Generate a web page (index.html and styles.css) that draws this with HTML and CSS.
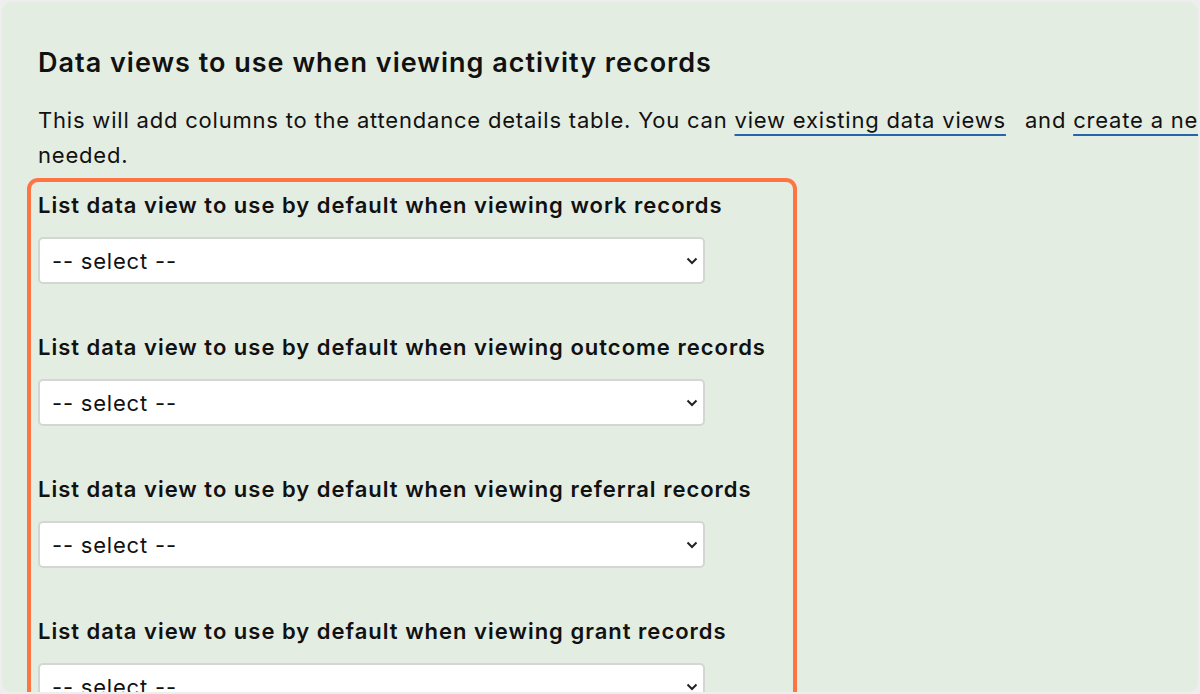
FILE: index.html
```html
<!DOCTYPE html>
<html lang="en">
<head>
<meta charset="utf-8">
<title>Data views</title>
<link rel="stylesheet" href="styles.css">
</head>
<body>
<div class="panel">
  <h2 class="title">Data views to use when viewing activity records</h2>
  <p class="intro">This will add columns to the attendance details table. You can <a class="link link-gap" href="#">view existing data views</a> and <a class="link" href="#">create a new data view</a> if needed.</p>
  <div class="highlight">
    <div class="field">
      <label class="field-label">List data view to use by default when viewing work records</label>
      <div class="select-wrap">
        <select class="select"><option>-- select --</option></select>
        <svg class="chev" width="12" height="8" viewBox="0 0 12 8"><path d="M1.5 1.5 L6 6 L10.5 1.5" fill="none" stroke="#222" stroke-width="2"/></svg>
      </div>
    </div>
    <div class="field">
      <label class="field-label">List data view to use by default when viewing outcome records</label>
      <div class="select-wrap">
        <select class="select"><option>-- select --</option></select>
        <svg class="chev" width="12" height="8" viewBox="0 0 12 8"><path d="M1.5 1.5 L6 6 L10.5 1.5" fill="none" stroke="#222" stroke-width="2"/></svg>
      </div>
    </div>
    <div class="field">
      <label class="field-label">List data view to use by default when viewing referral records</label>
      <div class="select-wrap">
        <select class="select"><option>-- select --</option></select>
        <svg class="chev" width="12" height="8" viewBox="0 0 12 8"><path d="M1.5 1.5 L6 6 L10.5 1.5" fill="none" stroke="#222" stroke-width="2"/></svg>
      </div>
    </div>
    <div class="field">
      <label class="field-label">List data view to use by default when viewing grant records</label>
      <div class="select-wrap">
        <select class="select"><option>-- select --</option></select>
        <svg class="chev" width="12" height="8" viewBox="0 0 12 8"><path d="M1.5 1.5 L6 6 L10.5 1.5" fill="none" stroke="#222" stroke-width="2"/></svg>
      </div>
    </div>
  </div>
</div>
</body>
</html>
```

FILE: styles.css
```css
html, body {
  margin: 0;
  padding: 0;
  background: #eeeeee;
  height: 100%;
  overflow: hidden;
}
body {
  font-family: Inter, "Noto Sans", sans-serif;
  color: #111;
}
.panel {
  margin: 2px 2px 0 2px;
  height: 690px;
  background: #e4ede2;
  border-radius: 9px;
  padding: 45px 0 0 36px;
  overflow: hidden;
  box-sizing: border-box;
}
.title {
  margin: 0;
  font-size: 27px;
  font-weight: 600;
  line-height: 32px;
  letter-spacing: 1px;
}
.intro {
  margin: 24px 0 0 0;
  width: 1370px;
  font-size: 22px;
  line-height: 35px;
  letter-spacing: 0.8px;
}
.link {
  color: #111;
  text-decoration: underline;
  text-decoration-color: #2565ae;
  text-decoration-thickness: 2px;
  text-underline-offset: 6px;
}
.link-gap {
  margin-right: 12px;
}
.highlight {
  margin: 5px 0 0 -11px;
  width: 770px;
  box-sizing: border-box;
  border: 4px solid #ff7443;
  border-bottom: none;
  border-radius: 11px 11px 0 0;
  padding: 9px 0 60px 7px;
  display: flex;
  flex-direction: column;
  gap: 49px;
}
.field {
  display: flex;
  flex-direction: column;
  gap: 18px;
}
.field-label {
  font-size: 22px;
  font-weight: 600;
  line-height: 28px;
  letter-spacing: 1px;
}
.select-wrap {
  position: relative;
  width: 667px;
}
.select {
  appearance: none;
  -webkit-appearance: none;
  display: block;
  width: 100%;
  height: 47px;
  box-sizing: border-box;
  background: #fff;
  border: 2px solid #d3d6d2;
  border-radius: 5px;
  padding: 0 0 0 12px;
  font-family: Inter, "Noto Sans", sans-serif;
  font-size: 22px;
  letter-spacing: 0.8px;
  color: #111;
}
.chev {
  position: absolute;
  right: 7px;
  top: 20px;
  pointer-events: none;
}
```
